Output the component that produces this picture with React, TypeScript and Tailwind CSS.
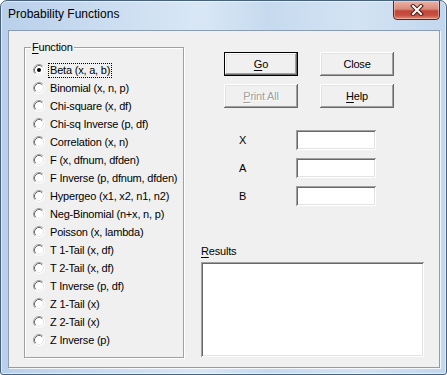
import React from "react";

const items = [
  "Beta (x, a, b)",
  "Binomial (x, n, p)",
  "Chi-square (x, df)",
  "Chi-sq Inverse (p, df)",
  "Correlation (x, n)",
  "F (x, dfnum, dfden)",
  "F Inverse (p, dfnum, dfden)",
  "Hypergeo (x1, x2, n1, n2)",
  "Neg-Binomial (n+x, n, p)",
  "Poisson (x, lambda)",
  "T 1-Tail (x, df)",
  "T 2-Tail (x, df)",
  "T Inverse (p, df)",
  "Z 1-Tail (x)",
  "Z 2-Tail (x)",
  "Z Inverse (p)",
];

function Radio({ checked }: { checked: boolean }) {
  return (
    <svg width="12" height="12" viewBox="0 0 12 12" className="shrink-0">
      <circle cx="6" cy="6" r="5.5" fill="#fff" />
      <path d="M2.11 9.89 A5.5 5.5 0 0 1 9.89 2.11" fill="none" stroke="#a0a0a0" strokeWidth="1" />
      <path d="M2.82 9.18 A4.5 4.5 0 0 1 9.18 2.82" fill="none" stroke="#696969" strokeWidth="1" />
      <path d="M9.89 2.11 A5.5 5.5 0 0 1 2.11 9.89" fill="none" stroke="#ffffff" strokeWidth="1" />
      <path d="M9.18 2.82 A4.5 4.5 0 0 1 2.82 9.18" fill="none" stroke="#e3e3e3" strokeWidth="1" />
      {checked && <circle cx="6" cy="6" r="2" fill="#000" />}
    </svg>
  );
}

function Btn({
  children,
  def,
  disabled,
}: {
  children: React.ReactNode;
  def?: boolean;
  disabled?: boolean;
}) {
  return (
    <div
      className={
        "w-[74px] h-[24px] flex items-center justify-center bg-[#f0f0f0] " +
        (def
          ? "border border-black shadow-[inset_-1px_-1px_0_#696969,inset_1px_1px_0_#fff,inset_-2px_-2px_0_#a0a0a0,inset_2px_2px_0_#e3e3e3]"
          : "shadow-[inset_-1px_-1px_0_#696969,inset_1px_1px_0_#fff,inset_-2px_-2px_0_#a0a0a0,inset_2px_2px_0_#e3e3e3]") +
        (disabled ? " text-[#a0a0a0] [text-shadow:1px_1px_0_#fff]" : " text-black")
      }
    >
      {children}
    </div>
  );
}

function Field() {
  return (
    <div className="w-[80px] h-[20px] bg-white shadow-[inset_1px_1px_0_#a0a0a0,inset_-1px_-1px_0_#fff,inset_2px_2px_0_#696969,inset_-2px_-2px_0_#e3e3e3]" />
  );
}

export default function App() {
  return (
    <div className="w-[447px] h-[375px] flex flex-col border border-[#47607e] rounded-t-[7px] rounded-b-[3px] overflow-hidden bg-[linear-gradient(90deg,#b9d0ea_0%,#cfe0f2_30%,#d9e7f5_45%,#c6daef_60%,#d3e3f3_80%,#c2d7ee_100%)] shadow-[inset_0_0_0_1px_rgba(255,255,255,0.55)] font-['Liberation_Sans',Arial,sans-serif] text-[11px] tracking-[-0.2px] text-black">
      <div className="h-[29px] flex items-start shrink-0">
        <div className="pl-[7px] pt-[6px] text-[12px] tracking-normal leading-[14px] text-black">
          Probability Functions
        </div>
        <div className="ml-auto mr-[6px] -mt-[1px] w-[47px] h-[20px] rounded-b-[4px] border border-[#5a2620] bg-[linear-gradient(180deg,#eab3a5_0%,#d88b7b_45%,#c0463a_55%,#c9503f_80%,#e0907a_100%)] shadow-[inset_0_0_0_1px_rgba(255,220,210,0.45)] flex items-center justify-center">
          <svg width="14" height="12" viewBox="0 0 14 12">
            <path d="M3 2 L11 10 M11 2 L3 10" stroke="#4a1c16" strokeWidth="4" strokeLinecap="square" />
            <path d="M3 2 L11 10 M11 2 L3 10" stroke="#ffffff" strokeWidth="2" strokeLinecap="square" />
          </svg>
        </div>
      </div>
      <div className="ml-[7px] w-[432px] h-[338px] shrink-0 border border-[#8b9db4] bg-[#f0f0f0] shadow-[1px_1px_0_rgba(255,255,255,0.8)] flex">
        <div className="pl-[15px] pt-[16px]">
          <div className="relative w-[160px] h-[311px] border border-[#a0a0a0] shadow-[inset_1px_1px_0_#fff,1px_1px_0_#fff]">
            <div className="absolute left-[6px] -top-[7px] px-[1px] bg-[#f0f0f0] leading-[13px]">
              <span className="underline underline-offset-[2px]">F</span>unction
            </div>
            <div className="pt-[13px] pl-[8px] flex flex-col">
              {items.map((t, i) => (
                <div key={t} className="h-[18px] flex items-center">
                  <Radio checked={i === 0} />
                  <span
                    className={
                      "ml-[3px] px-[1px] leading-[13px] whitespace-nowrap border " +
                      (i === 0 ? "border-dotted border-black" : "border-transparent")
                    }
                  >
                    {t}
                  </span>
                </div>
              ))}
            </div>
          </div>
        </div>
        <div className="ml-[17px] w-[223px] pt-[21px] flex flex-col">
          <div className="pl-[23px] flex flex-col gap-[8px]">
            <div className="flex gap-[22px]">
              <Btn def>
                <span>
                  <span className="underline underline-offset-[2px]">G</span>o
                </span>
              </Btn>
              <Btn>Close</Btn>
            </div>
            <div className="flex gap-[22px]">
              <Btn disabled>
                <span>
                  <span className="underline underline-offset-[2px]">P</span>rint All
                </span>
              </Btn>
              <Btn>
                <span>
                  <span className="underline underline-offset-[2px]">H</span>elp
                </span>
              </Btn>
            </div>
          </div>
          <div className="mt-[22px] flex flex-col gap-[8px]">
            {["X", "A", "B"].map((l) => (
              <div key={l} className="flex items-center h-[20px]">
                <div className="w-[95px] pl-[38px]">{l}</div>
                <Field />
              </div>
            ))}
          </div>
          <div className="mt-[39px] h-[13px] leading-[13px]">
            <span className="underline underline-offset-[2px]">R</span>esults
          </div>
          <div className="mt-[4px] w-[223px] h-[95px] bg-white shadow-[inset_1px_1px_0_#a0a0a0,inset_-1px_-1px_0_#fff,inset_2px_2px_0_#696969,inset_-2px_-2px_0_#e3e3e3]" />
        </div>
      </div>
    </div>
  );
}
